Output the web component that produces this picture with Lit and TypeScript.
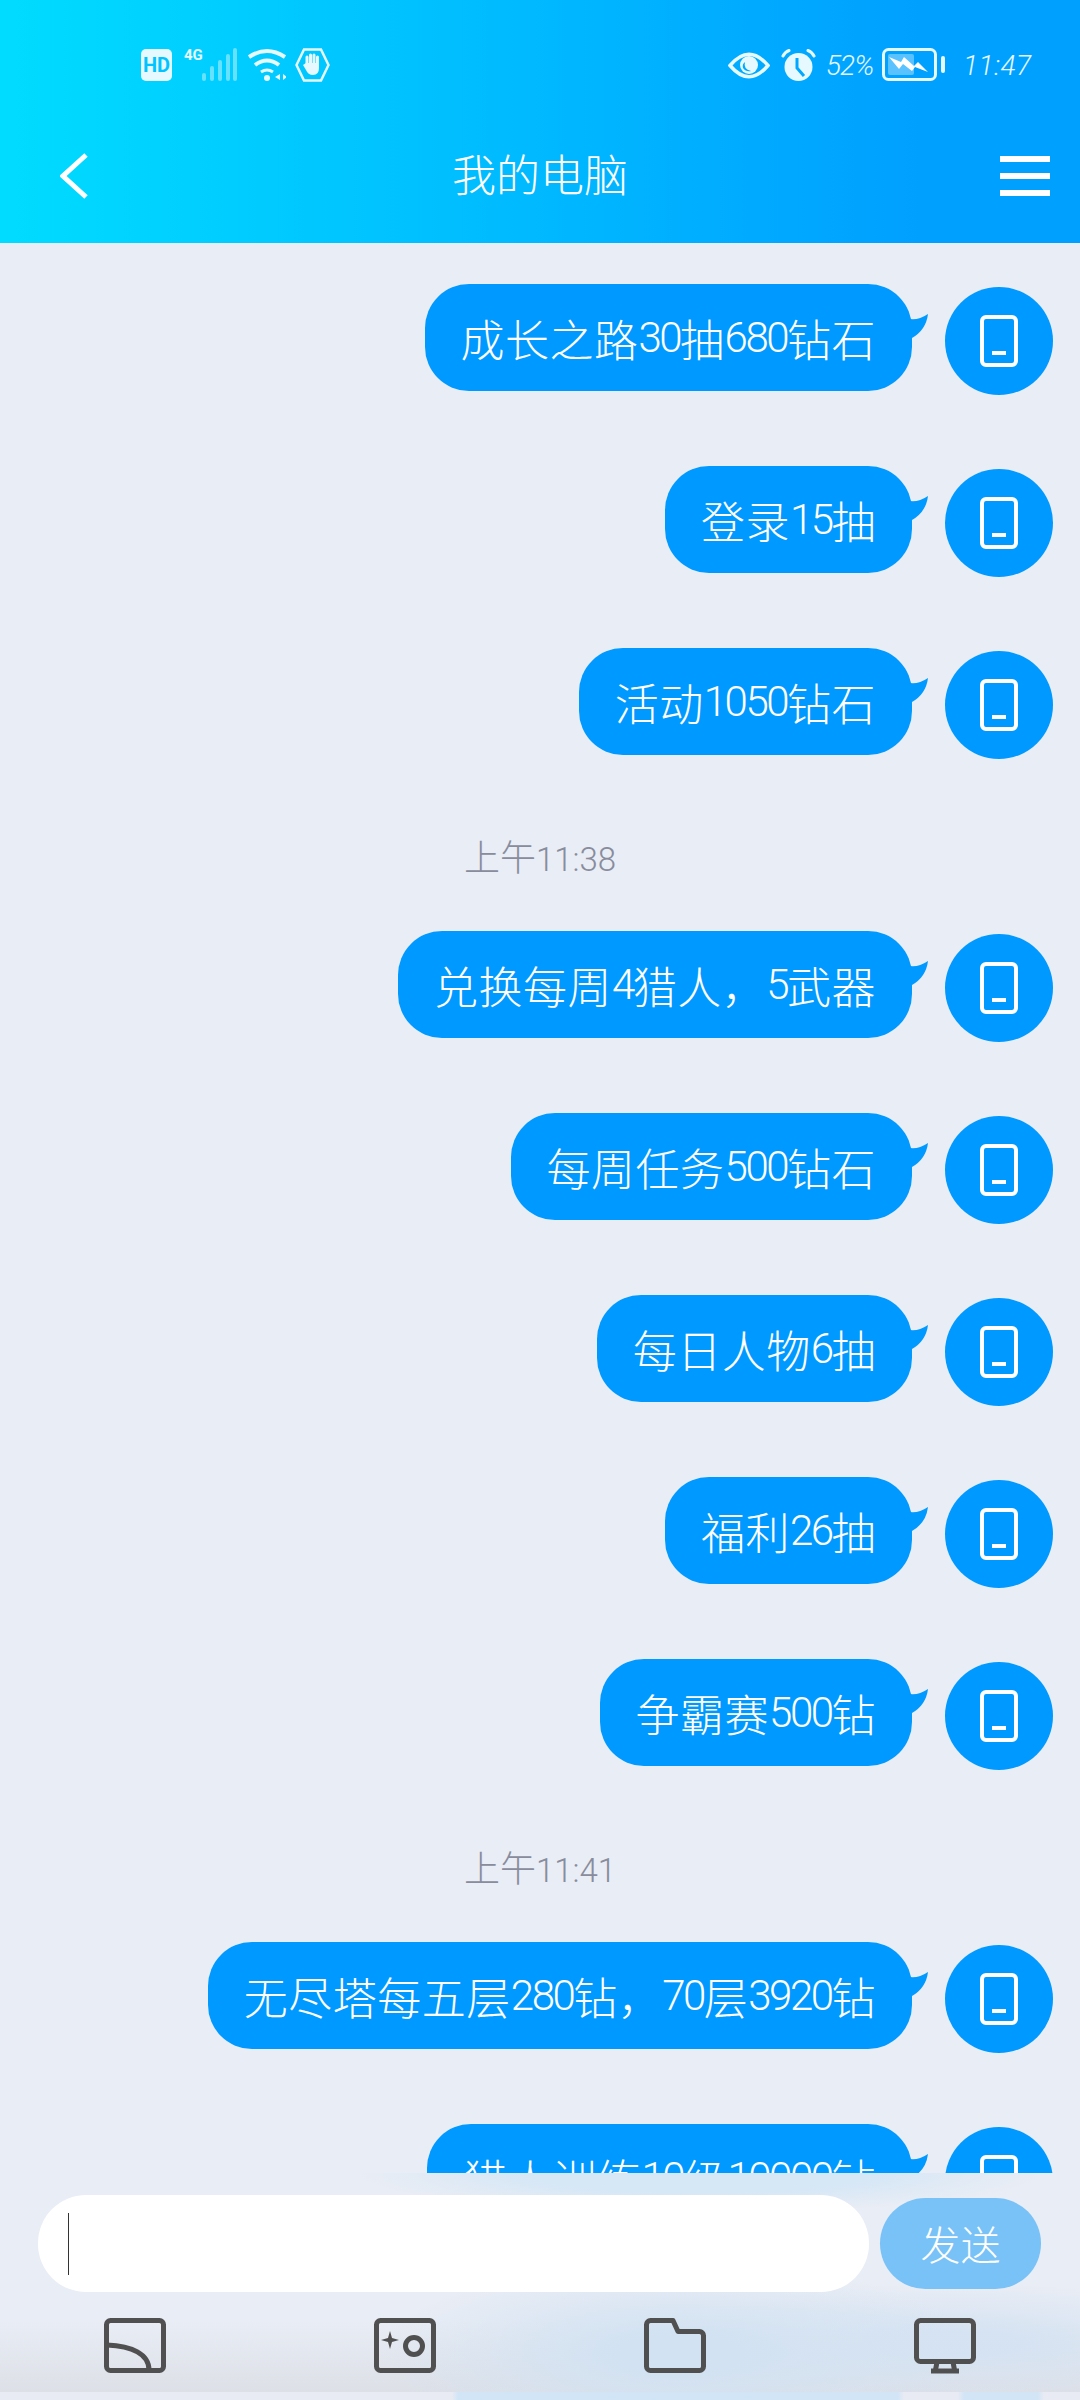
import { LitElement, html, css, svg } from 'lit';
import { customElement } from 'lit/decorators.js';

type Item = { time: string } | { text: string };

const items: Item[] = [
  { text: '成长之路30抽680钻石' },
  { text: '登录15抽' },
  { text: '活动1050钻石' },
  { time: '上午11:38' },
  { text: '兑换每周4猎人，5武器' },
  { text: '每周任务500钻石' },
  { text: '每日人物6抽' },
  { text: '福利26抽' },
  { text: '争霸赛500钻' },
  { time: '上午11:41' },
  { text: '无尽塔每五层280钻，70层3920钻' },
  { text: '猎人训练10级10000钻' },
];

// digits are narrower and lighter than the CJK text
const withDigits = (s: string) =>
  s.split(/([\d:]+)/).map((part, i) => (i % 2 ? html`<span class="num">${part}</span>` : part));

const tools = [
  svg`<rect x="2.5" y="2.5" width="57" height="50" rx="4"/><path d="M3 27C28 28 45 36 45 52"/>`,
  svg`<rect x="2.5" y="2.5" width="57" height="50" rx="4"/><circle cx="40" cy="28" r="8.5"/><path class="solid" d="M16 13l2 7 7 2-7 2-2 7-2-7-7-2 7-2z"/>`,
  svg`<path d="M6.5 2.5H29L34 13.5H55.5a4 4 0 0 1 4 4V48.5a4 4 0 0 1-4 4H6.5a4 4 0 0 1-4-4V6.5a4 4 0 0 1 4-4z"/>`,
  svg`<rect x="2.5" y="2.5" width="57" height="41" rx="4"/><path d="M23 44L21.500 52M39 44L40.500 52"/><path d="M17 53H45"/>`,
];

@customElement('app-root')
export class AppRoot extends LitElement {
  static styles = css`
    :host {
      display: block;
      width: 1080px;
      height: 2400px;
      overflow: hidden;
    }
    .page {
      display: flex;
      flex-direction: column;
      height: 2400px;
      background: #e9edf5;
      font-family: 'Noto Sans CJK SC', 'Noto Sans', sans-serif;
      font-weight: 300;
    }
    svg {
      display: block;
      flex: none;
    }

    /* header */
    .header {
      flex: none;
      height: 243px;
      color: #fff;
      background: linear-gradient(90deg, #00dcff, #00a0ff 85%);
    }
    .status {
      display: flex;
      justify-content: space-between;
      align-items: flex-start;
      height: 82px;
      padding: 48px 50px 0 141px;
    }
    .status-left,
    .status-right {
      display: flex;
      align-items: flex-start;
    }
    .hd {
      width: 31px;
      height: 32px;
      margin-top: 1px;
      border-radius: 5px;
      background: #e6f9ff;
      color: #00c4ff;
      font: 700 20px/32px Roboto, sans-serif;
      text-align: center;
    }
    .net {
      width: 18px;
      margin-left: 12px;
      color: #e6f9ff;
      font: 700 15px/15px Roboto, sans-serif;
    }
    .bars {
      margin-right: 11px;
    }
    .wifi {
      margin-right: 9px;
    }
    .eye {
      margin: 4px 11px 0 0;
    }
    .alarm {
      margin: 1px 10px 0 0;
    }
    .pct,
    .clock {
      font: italic 300 28px/34px Roboto, sans-serif;
      color: #e6f9ff;
    }
    .pct {
      width: 49px;
      margin: 1px 7px 0 0;
      letter-spacing: -1px;
    }
    .clock {
      width: 67px;
      margin: 1px 0 0 18px;
      letter-spacing: 0.5px;
    }
    .nav {
      display: grid;
      grid-template-columns: 1fr auto 1fr;
      align-items: center;
      height: 91px;
      padding: 0 30px;
    }
    .back {
      margin-left: 30px;
    }
    .title {
      margin-top: -5px;
      font-size: 44px;
      line-height: 50px;
    }
    .menu {
      justify-self: end;
      display: flex;
      flex-direction: column;
      gap: 11px;
      width: 50px;
    }
    .menu i {
      display: block;
      height: 6px;
      background: #fff;
    }

    /* messages */
    .messages {
      flex: 1;
      min-height: 0;
      overflow: hidden;
      padding-top: 41px;
    }
    .row {
      display: flex;
      justify-content: flex-end;
      align-items: flex-start;
      gap: 33px;
      height: 111px;
      margin-bottom: 71px;
      padding-right: 27px;
    }
    .bubble {
      position: relative;
      display: flex;
      align-items: center;
      height: 107px;
      padding: 0 36px;
      border-radius: 44px;
      background: #0099ff;
      color: #fff;
      font-size: 44px;
      letter-spacing: 0.5px;
      white-space: nowrap;
    }
    .bubble .num {
      font: 300 42px Roboto, sans-serif;
      letter-spacing: -2.5px;
    }
    .tail {
      position: absolute;
      left: 100%;
      top: 0;
      margin-left: -6px;
    }
    .avatar {
      display: flex;
      align-items: center;
      justify-content: center;
      flex: none;
      width: 108px;
      height: 108px;
      margin-top: 3px;
      border-radius: 50%;
      background: #0099ff;
    }
    .time {
      height: 54px;
      margin-bottom: 47px;
      text-align: center;
      color: #888c9c;
      font-size: 36px;
      line-height: 50px;
    }
    .time .num {
      font: 300 33px Roboto, sans-serif;
    }

    /* input and tools */
    .footer {
      flex: none;
      display: flex;
      flex-direction: column;
      height: 227px;
      padding-top: 22px;
      box-sizing: border-box;
      background:
        radial-gradient(ellipse 300px 90px at 680px 180px, #d2e2f2 20%, rgba(210, 226, 242, 0) 100%),
        radial-gradient(ellipse 300px 60px at 960px 170px, rgba(212, 226, 242, 0.9) 20%, rgba(212, 226, 242, 0) 100%),
        radial-gradient(ellipse 340px 40px at 700px 0, #d6e7f6 50%, rgba(214, 231, 246, 0) 100%),
        linear-gradient(180deg, #e9edf5 65%, #dcdfe6 98%);
    }
    .composer {
      display: flex;
      align-items: center;
      gap: 11px;
      padding: 0 39px 0 38px;
    }
    .input {
      flex: 1;
      display: flex;
      align-items: center;
      height: 97px;
      padding-left: 30px;
      border-radius: 48px;
      background: #fff;
    }
    .cursor {
      width: 1px;
      height: 62px;
      background: #333;
    }
    .send {
      flex: none;
      width: 161px;
      height: 91px;
      border-radius: 46px;
      background: #78c2f7;
      color: #fff;
      font-size: 40px;
      line-height: 91px;
      text-align: center;
    }
    .tools {
      display: grid;
      grid-template-columns: repeat(4, 1fr);
      justify-items: center;
      margin-top: 26px;
    }
    .tools svg {
      fill: none;
      stroke: #505050;
      stroke-width: 5;
      stroke-linejoin: round;
    }
    .tools .solid {
      fill: #505050;
      stroke: none;
    }
    .strip {
      margin-top: auto;
      height: 8px;
      background: linear-gradient(
        90deg,
        #e8ebf3 452px,
        #d2e5f7 458px,
        #d2e5f7 898px,
        #e8ebf3 904px,
        #e8ebf3 958px,
        #d2e5f7 964px,
        #d2e5f7 1038px,
        #e8ebf3 1044px
      );
    }
  `;

  private statusLeft() {
    return html`
      <div class="status-left">
        <div class="hd">HD</div>
        <div class="net">4G</div>
        <svg class="bars" width="35" height="33" viewBox="0 0 35 33" fill="#fff" fill-opacity="0.4">
          <rect x="0" y="25" width="4" height="8" rx="2" />
          <rect x="8" y="18" width="4" height="15" rx="2" />
          <rect x="16" y="12" width="4" height="21" rx="2" />
          <rect x="24" y="6" width="4" height="27" rx="2" />
          <rect x="31" y="0" width="4" height="33" rx="2" />
        </svg>
        <svg class="wifi" width="38" height="33" viewBox="0 0 38 33" fill="none" stroke="#e6f9ff" stroke-width="4">
          <path d="M1 9Q19 -3 37 9" />
          <path d="M7 17Q19 8 31 17" />
          <path d="M13 24Q19 20 25 24" stroke-width="3" />
          <circle cx="19" cy="30" r="3" fill="#e6f9ff" stroke="none" />
          <path d="M32 26V32L27 29zM35 26V32L39 29z" fill="#e6f9ff" stroke="none" />
        </svg>
        <svg width="35" height="34" viewBox="0 0 35 34" fill="none" stroke="#e6f9ff" stroke-width="2.500">
          <path d="M1.500 17L9 1.500H26L33.500 17L26 32.500H9z" />
          <path d="M12 9V18M15.500 7V17M19 7V17M22.500 9V18" stroke-width="3" stroke-linecap="round" />
          <path d="M11 15H24V20Q24 27 18 27Q13 27 11 22L8 17" fill="#e6f9ff" stroke="none" />
        </svg>
      </div>
    `;
  }

  private statusRight() {
    return html`
      <div class="status-right">
        <svg class="eye" width="42" height="27" viewBox="0 0 42 27" fill="none" stroke="#e6f9ff" stroke-width="3.500">
          <path d="M2 13.500Q21 -9 40 13.500Q21 36 2 13.500z" />
          <circle cx="21" cy="13" r="9" fill="#e6f9ff" stroke="none" />
          <path d="M17 10Q15 17 23 19Q18 20 15 16Q14 12 17 10z" fill="#00a8ff" stroke="none" />
        </svg>
        <svg class="alarm" width="35" height="33" viewBox="0 0 35 33" fill="none" stroke="#e6f9ff" stroke-width="3">
          <circle cx="17.500" cy="18" r="14" fill="#e6f9ff" stroke="none" />
          <path d="M2 7Q4 3 8 1.500M33 7Q31 3 27 1.500" stroke-linecap="round" />
          <path d="M16 9V19L23 27" stroke="#00a8ff" stroke-width="3" />
        </svg>
        <div class="pct">52%</div>
        <svg width="63" height="33" viewBox="0 0 63 33">
          <rect x="1.500" y="1.500" width="52" height="30" rx="5" fill="none" stroke="#e6f9ff" stroke-width="3" />
          <rect x="6" y="6" width="26" height="21" rx="2" fill="#fff" fill-opacity="0.35" />
          <path d="M7 9L19 14L22 9L32 18L36 14L46 24L33 19L30 23L21 16L17 21z" fill="#fff" />
          <rect x="59" y="8" width="4" height="17" rx="2" fill="#e6f9ff" />
        </svg>
        <div class="clock">11:47</div>
      </div>
    `;
  }

  private renderItem(item: Item) {
    if ('time' in item) return html`<div class="time">${withDigits(item.time)}</div>`;
    return html`
      <div class="row">
        <div class="bubble">
          ${withDigits(item.text)}
          <svg class="tail" width="24" height="60" viewBox="0 0 24 60" fill="#0099ff">
            <path d="M0 34Q10 38 22 30Q20 46 6 54L0 54z" />
          </svg>
        </div>
        <div class="avatar">
          <svg width="38" height="52" viewBox="0 0 38 52" fill="none" stroke="#fff" stroke-width="4">
            <rect x="2" y="2" width="34" height="48" rx="4" />
            <path d="M12 38H26" />
          </svg>
        </div>
      </div>
    `;
  }

  render() {
    return html`
      <div class="page">
        <div class="header">
          <div class="status">${this.statusLeft()}${this.statusRight()}</div>
          <div class="nav">
            <svg class="back" width="28" height="46" viewBox="0 0 28 46" fill="none" stroke="#fff" stroke-width="5">
              <path d="M26 2L3 23L26 44" />
            </svg>
            <div class="title">我的电脑</div>
            <div class="menu"><i></i><i></i><i></i></div>
          </div>
        </div>
        <div class="messages">${items.map((item) => this.renderItem(item))}</div>
        <div class="footer">
          <div class="composer">
            <div class="input"><div class="cursor"></div></div>
            <div class="send">发送</div>
          </div>
          <div class="tools">
            ${tools.map((icon) => html`<svg width="62" height="56" viewBox="0 0 62 56">${icon}</svg>`)}
          </div>
          <div class="strip"></div>
        </div>
      </div>
    `;
  }
}
